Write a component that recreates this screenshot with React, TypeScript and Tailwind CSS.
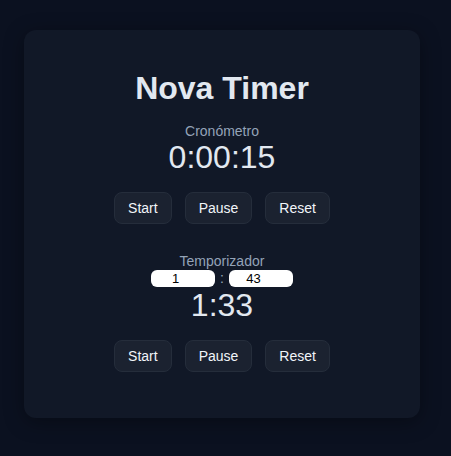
import React from "react";

function Btn({ label }: { label: string }) {
  return (
    <button className="h-8 px-[13px] rounded-lg bg-[#1b2230] border border-[#252d3b] text-[14px] leading-none font-medium text-[#f1f5f9]">
      {label}
    </button>
  );
}

function Buttons() {
  return (
    <div className="flex justify-center gap-[13px]">
      <Btn label="Start" />
      <Btn label="Pause" />
      <Btn label="Reset" />
    </div>
  );
}

export default function App() {
  return (
    <div
      className="min-h-[456px] w-[451px] bg-[#0b1120] pt-[30px] pl-[24px]"
      style={{ fontFamily: '"Liberation Sans", Arial, sans-serif' }}
    >
      <div className="w-[396px] h-[388px] rounded-xl bg-[#111827] shadow-[0_4px_20px_rgba(0,0,0,0.35)] pt-[39px] flex flex-col items-center text-center">
        <h1 className="text-[32px] leading-[38px] font-bold text-[#e2e8f0]">Nova Timer</h1>
        <div className="mt-[16px] text-[14px] leading-[16px] text-[#94a3b8]">Cronómetro</div>
        <div className="mt-[2px] text-[32px] leading-[32px] text-[#e2e8f0]">0:00:15</div>
        <div className="mt-[19px]">
          <Buttons />
        </div>
        <div className="mt-[29px] text-[14px] leading-[16px] text-[#94a3b8]">Temporizador</div>
        <div className="mt-[1px] flex items-center gap-[5px]">
          <input
            type="number"
            defaultValue={1}
            className="w-16 h-[17px] rounded-md bg-white text-black text-[13px] leading-[17px] text-center px-0 outline-none"
          />
          <span className="text-[14px] leading-[17px] text-[#94a3b8]">:</span>
          <input
            type="number"
            defaultValue={43}
            className="w-16 h-[17px] rounded-md bg-white text-black text-[13px] leading-[17px] text-center px-0 outline-none"
          />
        </div>
        <div className="mt-[2px] text-[32px] leading-[32px] text-[#e2e8f0]">1:33</div>
        <div className="mt-[19px]">
          <Buttons />
        </div>
      </div>
    </div>
  );
}
